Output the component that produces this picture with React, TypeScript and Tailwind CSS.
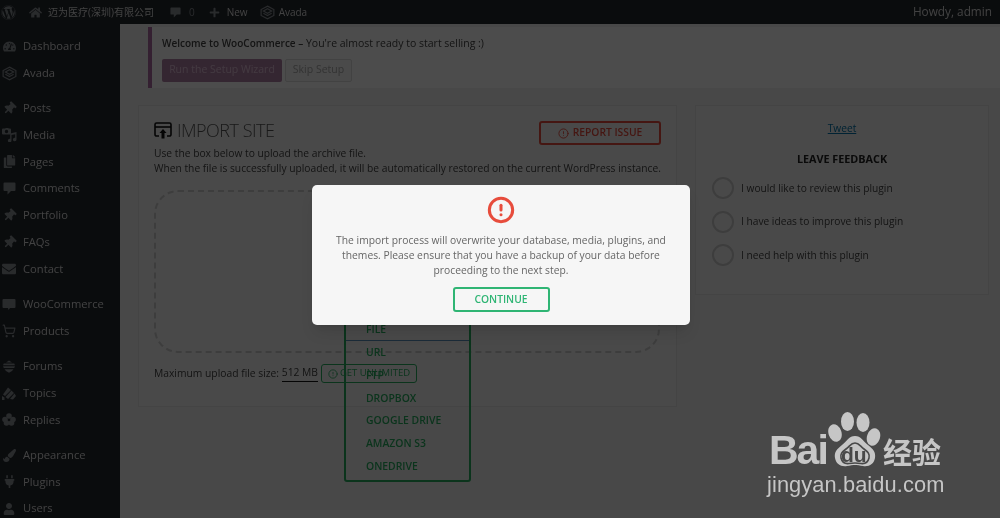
import type { ReactNode } from "react"
import {
  FaCopy,
  FaEnvelope,
  FaHome,
  FaPaintBrush,
  FaPlug,
  FaPlus,
  FaTachometerAlt,
  FaThumbtack,
  FaUser,
  FaWordpress,
} from "react-icons/fa"
import { FiAlertCircle } from "react-icons/fi"
import { ShoppingCart } from "lucide-react"

function AvadaIcon({ size = 15 }: { size?: number }) {
  return (
    <svg width={size} height={size} viewBox="0 0 20 20" fill="none" stroke="currentColor" strokeWidth="1.6">
      <path d="M10 1.5 18.5 6v8L10 18.5 1.5 14V6z" />
      <path d="M4.5 8 10 5l5.500 3L10 11z" />
      <path d="M4.500 11 10 14l5.500-3" />
    </svg>
  )
}

function BubbleIcon({ size = 13 }: { size?: number }) {
  return (
    <svg width={size} height={size} viewBox="0 0 13 13" fill="currentColor">
      <path d="M1.500.5h10a1 1 0 0 1 1 1v6.500a1 1 0 0 1-1 1H8L4.500 12.500V9h-3a1 1 0 0 1-1-1V1.500a1 1 0 0 1 1-1z" />
    </svg>
  )
}

function MediaIcon() {
  return (
    <svg width="15" height="14" viewBox="0 0 15 14" fill="currentColor">
      <path d="M1 .5h2l1-.5h2l1 .5h1a1 1 0 0 1 1 1v4a1 1 0 0 1-1 1H1a1 1 0 0 1-1-1v-4a1 1 0 0 1 1-1zM4.500 1.800a1.700 1.700 0 1 0 0 3.400 1.700 1.700 0 0 0 0-3.400z" />
      <path d="M14.500 4v7.500a1.800 1.800 0 1 1-1.300-1.700V6.200L9.500 7v5.500a1.800 1.800 0 1 1-1.300-1.700V5.500z" />
    </svg>
  )
}

function WooIcon() {
  return (
    <svg width="14" height="13" viewBox="0 0 14 13" fill="currentColor">
      <path d="M1.500 1h11A1 1 0 0 1 13.500 2v7a1 1 0 0 1-1 1H8l-1.500 2L6 10H1.500a1 1 0 0 1-1-1V2a1 1 0 0 1 1-1z" />
    </svg>
  )
}

function ForumIcon() {
  return (
    <svg width="12" height="13" viewBox="0 0 12 13" fill="currentColor">
      <path d="M3 2.500 6 .5l3 2zM.8 3.500h10.400l.8 1.800H0zM0 6.300h12l-.8 1.800H.8zM1.500 9.200h9L9 11l-3 1.800L3 11z" />
    </svg>
  )
}

function TopicIcon() {
  return (
    <svg width="14" height="13" viewBox="0 0 14 13" fill="currentColor">
      <path d="M6 .5 9 3 3 9 1 7.500zM9.500 3.500 12 6l-6 6-2.500-2zM12.500 6.500 14 9l-3 3.500-3-.5zM0 9l2.500 1.500V13H0z" />
    </svg>
  )
}

function ReplyIcon() {
  return (
    <svg width="14" height="13" viewBox="0 0 14 13" fill="currentColor">
      <circle cx="7" cy="3" r="2.800" />
      <circle cx="3" cy="6.500" r="2.800" />
      <circle cx="11" cy="6.500" r="2.800" />
      <circle cx="4.500" cy="10" r="2.800" />
      <circle cx="9.500" cy="10" r="2.800" />
    </svg>
  )
}

function BaiduPaw() {
  return (
    <svg width="54" height="58" viewBox="0 0 54 58" fill="#c6c6c6">
      <ellipse cx="7" cy="22" rx="6.500" ry="9" transform="rotate(-18 7 22)" />
      <ellipse cx="19.500" cy="10.500" rx="6.500" ry="9.500" />
      <ellipse cx="35" cy="11.500" rx="6.500" ry="9.500" />
      <ellipse cx="45.500" cy="26" rx="6.500" ry="9" transform="rotate(18 45.500 26)" />
      <path d="M27 25c6 0 8 5 13 9 5 4 8 7 7 13-1 6-6 9-12 8-3-.5-6-1-8-1s-5 .5-8 1c-6 1-11-2-12-8-1-6 2-9 7-13 5-4 7-9 13-9z" />
      <path
        d="M27 32c4 0 5 3 9 6 4 3 6 5 5 9-1 4-4 6-8 5.500-2-.3-4-.5-6-.5s-4 .2-6 .5c-4 .5-7-1.500-8-5.500-1-4 1-6 5-9 4-3 5-6 9-6z"
        fill="none"
        stroke="#484848"
        strokeWidth="1.600"
      />
    </svg>
  )
}

type NavItem = { label: string; icon: ReactNode }

const pin = <FaThumbtack size={13} className="rotate-45" />

const navGroups: NavItem[][] = [
  [
    { label: "Dashboard", icon: <FaTachometerAlt size={13} /> },
    { label: "Avada", icon: <AvadaIcon /> },
  ],
  [
    { label: "Posts", icon: pin },
    { label: "Media", icon: <MediaIcon /> },
    { label: "Pages", icon: <FaCopy size={13} /> },
    { label: "Comments", icon: <BubbleIcon /> },
    { label: "Portfolio", icon: pin },
    { label: "FAQs", icon: pin },
    { label: "Contact", icon: <FaEnvelope size={14} /> },
  ],
  [
    { label: "WooCommerce", icon: <WooIcon /> },
    { label: "Products", icon: <ShoppingCart size={14} /> },
  ],
  [
    { label: "Forums", icon: <ForumIcon /> },
    { label: "Topics", icon: <TopicIcon /> },
    { label: "Replies", icon: <ReplyIcon /> },
  ],
  [
    { label: "Appearance", icon: <FaPaintBrush size={13} /> },
    { label: "Plugins", icon: <FaPlug size={13} /> },
    { label: "Users", icon: <FaUser size={12} /> },
  ],
]

const storageOptions = ["URL", "FTP", "DROPBOX", "GOOGLE DRIVE", "AMAZON S3", "ONEDRIVE"]

const feedbackOptions = [
  "I would like to review this plugin",
  "I have ideas to improve this plugin",
  "I need help with this plugin",
]

export default function App() {
  return (
    <div className="h-[518px] w-[1000px] overflow-hidden bg-[#484848]">
      <div
        className="relative flex h-[518px] w-[1000px] flex-col overflow-hidden bg-[#f1f1f1] text-[10.300px] text-[#444] blur-[0.4px]"
        style={{ fontFamily: '"Open Sans", "Noto Sans CJK SC", sans-serif' }}
      >
        {/* admin bar */}
        <div className="flex h-6 shrink-0 items-center bg-[#23282d] text-[10px] text-[#ddd]">
          <FaWordpress size={15} className="ml-[1px] text-[#8a8f94]" />
          <FaHome size={13} className="ml-[13px] text-[#8a8f94]" />
          <span className="ml-[6px] w-[108px] whitespace-nowrap text-[10px]">迈为医疗(深圳)有限公司</span>
          <span className="ml-[14px] text-[#8a8f94]">
            <BubbleIcon size={11} />
          </span>
          <span className="ml-[8px] text-[#8a8f94]">0</span>
          <FaPlus size={11} className="ml-[14px] text-[#8a8f94]" />
          <span className="ml-[7px]">New</span>
          <span className="ml-[12px] text-[#8a8f94]">
            <AvadaIcon />
          </span>
          <span className="ml-[4px]">Avada</span>
          <span className="ml-auto mr-[8px] text-[11.800px]">Howdy, admin</span>
        </div>

        <div className="flex min-h-0 flex-1">
          {/* sidebar */}
          <div className="flex w-[120px] shrink-0 flex-col gap-[8.400px] bg-[#23282d] pt-[9px] text-[11.200px] text-[#ddd]">
            {navGroups.map((group, i) => (
              <div key={i} className="flex flex-col">
                {group.map(item => (
                  <div key={item.label} className="flex h-[26.800px] items-center">
                    <span className="flex w-[23px] justify-center pr-[5px] text-[#8a8f94]">{item.icon}</span>
                    {item.label}
                  </div>
                ))}
              </div>
            ))}
          </div>

          {/* main */}
          <div className="min-w-0 flex-1">
            <div className="ml-[28px] mt-[3px] h-[61px] border-l-4 border-[#b06ca4] bg-white pl-[10px] pt-[9px] text-[10.500px]">
              <div>
                <b className="text-[10px] font-semibold">Welcome to WooCommerce –</b> You're almost ready to start selling :)
              </div>
              <div className="mt-[7px] flex gap-[3px]">
                <div className="flex h-[23px] w-[120px] items-center justify-center rounded-[2px] bg-[#b07fa6] text-[#e0c0d8]">
                  Run the Setup Wizard
                </div>
                <div className="flex h-[23px] w-[67px] items-center justify-center rounded-[2px] border border-[#ddd] bg-[#f7f7f7] text-[#aaa]">
                  Skip Setup
                </div>
              </div>
            </div>

            <div className="ml-[18px] mt-[17px] flex items-start gap-[18px]">
              {/* import card */}
              <div className="relative h-[302px] w-[539px] shrink-0 border border-[#e5e5e5] bg-white/30 px-[15px] pt-[14px]">
                <div className="flex h-[26px] items-start justify-between">
                  <div className="-mt-[2px] flex items-center gap-[5px] text-[#555]">
                    <svg width="18" height="17" viewBox="0 0 18 17" fill="none" stroke="#111" strokeWidth="1.600">
                      <path d="M5 14H2.500a1.500 1.500 0 0 1-1.500-1.500v-10A1.500 1.500 0 0 1 2.500 1h13A1.500 1.500 0 0 1 17 2.500v10a1.500 1.500 0 0 1-1.500 1.500H13" />
                      <path d="M1 5h16" />
                      <path d="M9 16.500V9" strokeWidth="3" />
                      <path d="m5.500 11 3.500-4 3.500 4z" fill="#111" strokeWidth="0" />
                    </svg>
                    <span className="text-[18px] font-light leading-[24px] tracking-[-0.5px]">IMPORT SITE</span>
                  </div>
                  <div className="mt-[1px] flex h-[24px] w-[122px] items-center justify-center gap-[4px] rounded-[3px] border-2 border-[#e74c3c] font-semibold text-[#e74c3c]">
                    <FiAlertCircle size={11} />
                    REPORT ISSUE
                  </div>
                </div>
                <div className="whitespace-nowrap text-[10.250px] leading-[15px]">
                  <div>Use the box below to upload the archive file.</div>
                  <div>When the file is successfully uploaded, it will be automatically restored on the current WordPress instance.</div>
                </div>
                <div className="mt-[14px] h-[163px] w-[506px] rounded-[24px] border-[2.500px] border-dashed border-[#ccc]" />
                <div className="mt-[11px] flex items-center">
                  Maximum upload file size:&nbsp;
                  <span className="border-b border-[#111]">512 MB</span>
                  <div className="ml-[3px] flex h-[19px] w-[96px] items-center justify-center gap-[2px] rounded-[3px] border border-[#27ae60] text-[9.500px] text-[#27ae60]">
                    <FiAlertCircle size={10} />
                    GET UNLIMITED
                  </div>
                </div>

                {/* storage dropdown */}
                <div className="absolute left-[205px] top-[207.500px] w-[127px] rounded-[3px] border-2 border-[#27ae60] pb-[2px] text-[10.400px] font-semibold text-[#27ae60]">
                  <div className="flex h-[25px] items-end border-b-[1.500px] border-[#5b8fbd] pb-[1.500px] pl-[20px]">FILE</div>
                  <div className="pt-[1px]">
                    {storageOptions.map(name => (
                      <div key={name} className="flex h-[22.800px] items-center pl-[20px]">
                        {name}
                      </div>
                    ))}
                  </div>
                </div>
              </div>

              {/* feedback card */}
              <div className="h-[190px] w-[294px] shrink-0 border border-[#e5e5e5] bg-white/30 px-[16px] pt-[15px] text-[10.200px]">
                <div className="text-center text-[#0073aa] underline">Tweet</div>
                <div className="mt-[15px] text-center text-[10.800px] font-bold text-[#222]">LEAVE FEEDBACK</div>
                <div className="mt-[10px] flex flex-col gap-[11.500px]">
                  {feedbackOptions.map(text => (
                    <div key={text} className="flex items-center gap-[7px]">
                      <span className="h-[22px] w-[22px] shrink-0 rounded-full border-2 border-[#ccc]" />
                      {text}
                    </div>
                  ))}
                </div>
              </div>
            </div>
          </div>
        </div>

        {/* overlay */}
        <div className="absolute inset-0 bg-black/70" />

        {/* modal */}
        <div className="absolute left-[312px] top-[185px] flex h-[140px] w-[378px] flex-col items-center rounded-[5px] bg-[#f6f6f6] pt-[11px] shadow-lg">
          <FiAlertCircle size={28} strokeWidth={2.600} className="text-[#e74c3c]" />
          <div className="mt-[9px] w-[340px] text-center leading-[15px] text-[#666]">
            The import process will overwrite your database, media, plugins, and themes. Please ensure that you have a backup of your data before proceeding to the next step.
          </div>
          <div className="mt-[9px] flex h-[25px] w-[97px] items-center justify-center rounded-[3px] border-2 border-[#2fb574] font-semibold text-[#2fb574]">
            CONTINUE
          </div>
        </div>

        {/* watermark */}
        <div className="absolute left-[767px] top-[411px] w-[180px] text-[#c6c6c6]">
          <div className="relative h-[58px]">
            <span
              className="absolute left-[2px] top-[17px] text-[41px] font-bold leading-[44px] tracking-[-2px]"
              style={{ fontFamily: '"Liberation Sans", sans-serif' }}
            >
              Bai
            </span>
            <span className="absolute left-[61px] top-0">
              <BaiduPaw />
            </span>
            <span
              className="absolute left-[74px] top-[32px] text-[21px] font-bold leading-[24px] text-[#484848]"
              style={{ fontFamily: '"Liberation Sans", sans-serif' }}
            >
              du
            </span>
            <span
              className="absolute left-[116px] top-[22px] text-[29px] font-bold leading-[36px]"
              style={{ fontFamily: '"Noto Sans CJK SC", sans-serif' }}
            >
              经验
            </span>
          </div>
          <div
            className="mt-[4px] whitespace-nowrap text-[21.800px] leading-[24px] tracking-[0.1px]"
            style={{ fontFamily: '"Liberation Sans", sans-serif' }}
          >
            jingyan.baidu.com
          </div>
        </div>
      </div>
    </div>
  )
}
